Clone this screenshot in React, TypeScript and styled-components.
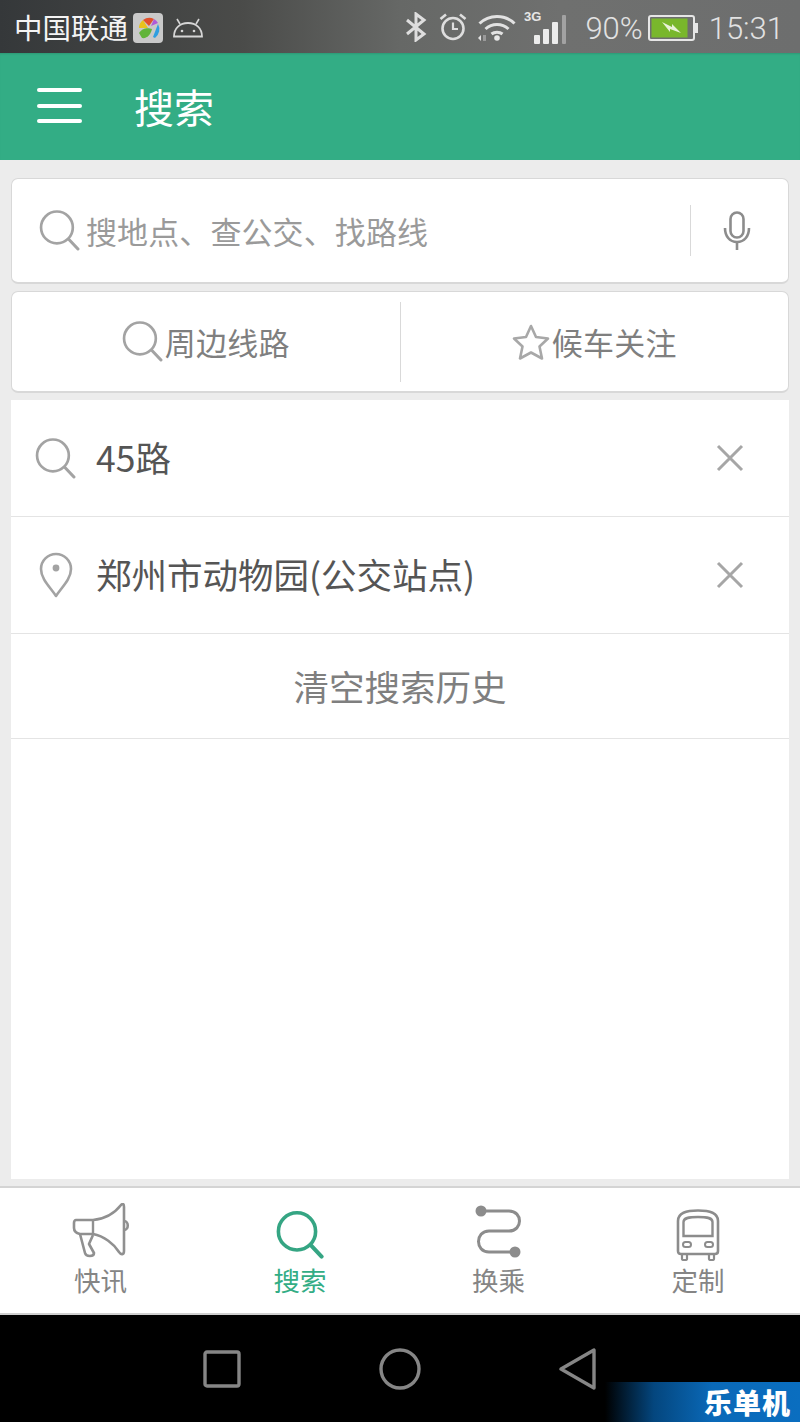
import React from "react";
import styled, { createGlobalStyle } from "styled-components";

const Global = createGlobalStyle`
  html, body { margin: 0; padding: 0; background: #000; }
  * { box-sizing: border-box; }
  body { font-family: "Noto Sans CJK SC", "Noto Sans", sans-serif; }
`;

const Page = styled.div`
  width: 800px;
  height: 1422px;
  display: flex;
  flex-direction: column;
  overflow: hidden;
  position: relative;
  background: #ececec;
`;

const StatusBar = styled.div`
  height: 53px;
  flex: none;
  display: flex;
  align-items: center;
  padding: 3px 16px 0 15px;
  background: linear-gradient(90deg, #35383a 0%, #4a4b49 30%, #666866 50%, #6f706f 70%, #6d6e6e 100%);
  color: #fff;
`;

const Carrier = styled.span`
  font-size: 28.5px;
  line-height: 1;
  color: #f4f4f4;
  letter-spacing: 0;
  margin-top: -1px;
  margin-left: -1px;
`;

const StatusLeft = styled.div`
  display: flex;
  align-items: center;
`;

const StatusRight = styled.div`
  margin-left: auto;
  display: flex;
  align-items: center;
  color: #dcdcdc;
`;

const StatusText = styled.span<{ $ml?: number }>`
  font-family: "Roboto", sans-serif;
  font-weight: 300;
  font-size: 31px;
  line-height: 1;
  color: #e2e2e2;
  margin-left: ${(p) => p.$ml ?? 0}px;
`;

const Header = styled.header`
  height: 107px;
  flex: none;
  display: flex;
  align-items: center;
  padding-left: 37px;
  background: #33ad85;
  box-shadow: inset 0 2px 2px -1px rgba(0, 0, 0, 0.12);
`;

const Burger = styled.div`
  width: 45px;
  height: 35px;
  display: flex;
  flex-direction: column;
  justify-content: space-between;
  margin-right: 52px;
  margin-top: -2px;
  & > i {
    display: block;
    height: 4px;
    border-radius: 2px;
    background: #fff;
  }
`;

const Title = styled.h1`
  margin: 0;
  font-size: 40px;
  line-height: 1;
  font-weight: 400;
  color: #fff;
  margin-top: -1px;
`;

const Content = styled.main`
  flex: 1;
  display: flex;
  flex-direction: column;
  padding: 18px 11px 7px;
  gap: 7px;
  min-height: 0;
`;

const Card = styled.div<{ $h: number }>`
  height: ${(p) => p.$h}px;
  flex: none;
  background: #fff;
  border: 1px solid #d8d8d8;
  border-bottom-width: 2px;
  border-radius: 7px;
  display: flex;
  align-items: center;
`;

const SearchField = styled.div`
  flex: 1;
  display: flex;
  align-items: center;
  padding-left: 27px;
  gap: 6px;
  height: 100%;
`;

const Placeholder = styled.span`
  font-size: 31px;
  color: #9a9a9a;
  line-height: 1;
  margin-top: -1px;
  letter-spacing: 0.1px;
`;

const VDivider = styled.div<{ $h: number }>`
  width: 1px;
  height: ${(p) => p.$h}px;
  background: #d9d9d9;
  flex: none;
`;

const MicBox = styled.div`
  width: 97px;
  display: flex;
  justify-content: center;
  align-items: center;
  padding: 0 6px 0 0;
`;

const HalfButton = styled.div`
  flex: 1;
  display: flex;
  justify-content: center;
  align-items: center;
  gap: 2px;
  height: 100%;
  font-size: 31px;
  letter-spacing: 0.2px;
  color: #7f7f7f;
  line-height: 1;
`;

const List = styled.div`
  flex: 1;
  background: #fff;
  display: flex;
  flex-direction: column;
`;

const Row = styled.div`
  height: 117px;
  flex: none;
  border-bottom: 1px solid #e4e4e4;
  display: flex;
  align-items: center;
  padding: 0 45px 0 24px;
`;

const IconSlot = styled.div`
  width: 61px;
  flex: none;
  display: flex;
  align-items: center;
  justify-content: flex-start;
`;

const RowText = styled.span`
  flex: 1;
  font-size: 35.5px;
  line-height: 1;
  color: #555;
  margin-top: -2px;
`;

const ClearRow = styled.div`
  height: 105px;
  flex: none;
  border-bottom: 1px solid #e4e4e4;
  display: flex;
  align-items: center;
  justify-content: center;
  font-size: 35.5px;
  color: #7f7f7f;
  line-height: 1;
`;

const TabBar = styled.nav`
  height: 129px;
  flex: none;
  background: #fff;
  border-top: 2px solid #d4d4d4;
  border-bottom: 2px solid #cfcfcf;
  display: grid;
  grid-template-columns: 201px 198px 199px 200px;
`;

const Tab = styled.div<{ $active?: boolean; $iconGap: number }>`
  display: flex;
  flex-direction: column;
  align-items: center;
  justify-content: flex-end;
  padding-bottom: 20px;
  font-size: 26.5px;
  line-height: 1;
  color: ${(p) => (p.$active ? "#33ad85" : "#858585")};
  & > svg {
    margin-bottom: ${(p) => p.$iconGap}px;
  }
`;

const NavBar = styled.div`
  flex: none;
  height: 107px;
  background: #000;
  display: flex;
  align-items: center;
  justify-content: center;
  position: relative;
`;

const NavSlot = styled.div`
  width: 178px;
  display: flex;
  justify-content: center;
`;

const Watermark = styled.div`
  position: absolute;
  right: 0;
  bottom: 0;
  width: 195px;
  height: 40px;
  display: flex;
  align-items: center;
  justify-content: flex-end;
  padding-right: 9px;
  background: linear-gradient(90deg, #000 0%, #04467e 25%, #0a69b8 55%, #0a6ec0 100%);
  color: #fff;
  font-size: 28px;
  font-weight: 900;
  letter-spacing: 1px;
  line-height: 1;
`;

const Lens = ({ size, color = "#a3a3a3", sw = 2.6 }: { size: number; color?: string; sw?: number }) => (
  <svg width={size} height={size} viewBox="0 0 40 40" fill="none">
    <circle cx="17.5" cy="17" r="15.5" stroke={color} strokeWidth={sw} />
    <path d="M29 28.5 L38 38" stroke={color} strokeWidth={sw + 0.4} strokeLinecap="round" />
  </svg>
);

const Cross = () => (
  <svg width="28" height="28" viewBox="0 0 28 28" fill="none">
    <path d="M2 2 L26 26 M26 2 L2 26" stroke="#a6a6a6" strokeWidth="3" />
  </svg>
);

const Launcher = () => (
  <svg width="30" height="30" viewBox="0 0 30 30" style={{ marginLeft: 5, marginTop: -1 }}>
    <rect width="30" height="30" rx="4" fill="#c9c9c9" />
    <path d="M6 15 A10 10 0 0 1 10 7 L15 15 Z" fill="#e8c21c" />
    <path d="M10 7 A11 11 0 0 1 21 6 L16 13 Z" fill="#e2502b" />
    <path d="M21 6 A10 10 0 0 1 25 10 L18 13 Z" fill="#b05bd8" />
    <path d="M25 11 A11 11 0 0 1 22 25 L20 24 Z" fill="#2f9fe0" />
    <path d="M6 20 C10 14 16 15 19 16 C18 21 14 26 9 25 Z" fill="#62b43a" />
  </svg>
);

const AndroidHead = () => (
  <svg width="32" height="20" viewBox="0 0 32 20" fill="none" style={{ marginLeft: 9 }}>
    <path d="M2 18.5 C2 10 8 5 16 5 C24 5 30 10 30 18.5 Z" stroke="#d6d6d6" strokeWidth="1.8" />
    <path d="M8 6 L5 1 M24 6 L27 1" stroke="#d6d6d6" strokeWidth="1.6" />
    <circle cx="10" cy="13" r="1.3" fill="#d6d6d6" />
    <circle cx="22" cy="13" r="1.3" fill="#d6d6d6" />
  </svg>
);

const Bluetooth = () => (
  <svg width="22" height="30" viewBox="0 0 22 30" fill="none" style={{ marginTop: -3 }}>
    <path d="M2 8 L19 22 L11 28 L11 2 L19 8 L2 22" stroke="#dedede" strokeWidth="3" />
  </svg>
);

const Alarm = () => (
  <svg width="28" height="28" viewBox="0 0 28 28" fill="none" style={{ marginLeft: 12, marginTop: -3 }}>
    <circle cx="14" cy="15.5" r="10.5" stroke="#dedede" strokeWidth="2.6" />
    <path d="M14 9.5 V16 H19" stroke="#dedede" strokeWidth="2.2" />
    <path d="M1.5 6 L7 1.5 M26.5 6 L21 1.5" stroke="#dedede" strokeWidth="2.6" />
  </svg>
);

const Wifi = () => (
  <svg width="38" height="28" viewBox="0 0 38 28" fill="none" style={{ marginLeft: 11, marginTop: -3 }}>
    <path d="M1.5 10.5 C11 1 27 1 36.5 10.5" stroke="#e2e2e2" strokeWidth="3" />
    <path d="M7.5 16 C14 10 24 10 30.5 16" stroke="#e2e2e2" strokeWidth="3" />
    <path d="M13.5 21 C16.5 18.5 21.5 18.5 24.5 21" stroke="#e2e2e2" strokeWidth="3" />
    <circle cx="19" cy="25" r="2.8" fill="#e8e8e8" />
    <path d="M0 25 L3 22 V28 Z" fill="#e2e2e2" />
    <rect x="5" y="22" width="3" height="6" fill="#9a9a9a" />
  </svg>
);

const Signal = () => (
  <svg width="43" height="34" viewBox="0 0 43 34" style={{ marginLeft: 8, marginTop: -3 }}>
    <text x="0" y="11" fontFamily="Liberation Sans, sans-serif" fontSize="13" fontWeight="700" fill="#e6e6e6">3G</text>
    <rect x="10" y="25" width="6" height="9" rx="1" fill="#ececec" />
    <rect x="19" y="19" width="6" height="15" rx="1" fill="#ececec" />
    <rect x="28" y="12" width="6" height="22" rx="1" fill="#ececec" />
    <rect x="38" y="5" width="4" height="29" rx="1" fill="#a2a2a2" />
  </svg>
);

const Battery = () => (
  <svg width="50" height="26" viewBox="0 0 50 26" style={{ marginLeft: 5 }}>
    <rect x="1" y="1" width="45" height="24" rx="2" fill="none" stroke="#e6e6e6" strokeWidth="2" />
    <rect x="47" y="8" width="3" height="10" fill="#e6e6e6" />
    <rect x="3.5" y="3.5" width="36" height="19" fill="#79b72c" />
    <path d="M14 7 L24 12 L24 9 L33 18 L22 14 L22 17 Z" fill="#e9f2d8" />
  </svg>
);

const Mic = () => (
  <svg width="28" height="40" viewBox="0 0 28 40" fill="none">
    <rect x="7.5" y="1.5" width="13" height="25" rx="6.5" stroke="#8c8c8c" strokeWidth="2.6" />
    <path d="M2 17 C2 25 6.5 31 14 31 C21.5 31 26 25 26 17" stroke="#8c8c8c" strokeWidth="2.6" />
    <path d="M14 31 V39" stroke="#8c8c8c" strokeWidth="2.6" />
  </svg>
);

const Star = () => (
  <svg width="38" height="38" viewBox="0 0 38 38" fill="none">
    <path d="M19 3 L24 14 L36 15.500 L27.500 23.500 L30 35.500 L19 29.500 L8 35.500 L10.500 23.500 L2 15.500 L14 14 Z" stroke="#a8a8a8" strokeWidth="2.6" strokeLinejoin="round" />
  </svg>
);

const Pin = () => (
  <svg width="34" height="46" viewBox="0 0 34 46" fill="none" style={{ marginLeft: 4 }}>
    <path d="M17 44 C11 35 2 27 2 17 A15 15 0 0 1 32 17 C32 27 23 35 17 44 Z" stroke="#a3a3a3" strokeWidth="2.6" strokeLinejoin="round" />
    <circle cx="17" cy="16" r="3.4" fill="#a3a3a3" />
  </svg>
);

const Horn = () => (
  <svg width="58" height="58" viewBox="0 0 58 58" fill="none">
    <path d="M4 17 H21 C32 16 42 11 49 2 C51 0 52 1 52 4 V48 C52 52 49 52 47 49 C42 41 32 33 21 31 H8 C4 30 2 28 2 25 V20 C2 18 3 17 4 17 Z" stroke="#909090" strokeWidth="2.6" strokeLinejoin="round" />
    <path d="M21 17 V31" stroke="#909090" strokeWidth="2.4" />
    <path d="M52 18 C57 18 57 27 52 27" stroke="#909090" strokeWidth="2.6" />
    <path d="M8 31 L13 50 C14 54 22 54 22 50 L17 41 L21 32" stroke="#909090" strokeWidth="2.6" strokeLinejoin="round" />
  </svg>
);

const Route = () => (
  <svg width="52" height="54" viewBox="0 0 52 54" fill="none">
    <circle cx="8" cy="6" r="5.500" fill="#8c8c8c" />
    <circle cx="42" cy="47" r="5.500" fill="#8c8c8c" />
    <path d="M8 6 H36 C50 6 50 26 36 26 H16 C2 26 2 47 16 47 H42" stroke="#8c8c8c" strokeWidth="3" />
  </svg>
);

const Bus = () => (
  <svg width="44" height="52" viewBox="0 0 44 52" fill="none">
    <path d="M2 12 C2 4 10 1.500 22 1.500 C34 1.500 42 4 42 12 V42 C42 44 41 45 39 45 H5 C3 45 2 44 2 42 Z" stroke="#8c8c8c" strokeWidth="2.6" />
    <path d="M7.500 13 C7.500 9 12 8 22 8 C32 8 36.500 9 36.500 13 V27 H7.500 Z" stroke="#8c8c8c" strokeWidth="2.4" />
    <rect x="7" y="33" width="8" height="5" rx="2.500" stroke="#8c8c8c" strokeWidth="2" />
    <rect x="29" y="33" width="8" height="5" rx="2.500" stroke="#8c8c8c" strokeWidth="2" />
    <path d="M6 45 V50 C6 51.500 11 51.500 11 50 V45 M33 45 V50 C33 51.500 38 51.500 38 50 V45" stroke="#8c8c8c" strokeWidth="2.200" />
  </svg>
);

const NavSquare = () => (
  <svg width="38" height="38" viewBox="0 0 38 38" fill="none">
    <rect x="2" y="2" width="34" height="34" rx="2" stroke="#868686" strokeWidth="3.4" />
  </svg>
);

const NavCircle = () => (
  <svg width="42" height="42" viewBox="0 0 42 42" fill="none">
    <circle cx="21" cy="21" r="19" stroke="#868686" strokeWidth="3.4" />
  </svg>
);

const NavBack = () => (
  <svg width="38" height="42" viewBox="0 0 38 42" fill="none">
    <path d="M35 2 V40 L2 21 Z" stroke="#868686" strokeWidth="3.4" strokeLinejoin="round" />
  </svg>
);

export default function App() {
  return (
    <Page>
      <Global />
      <StatusBar>
        <StatusLeft>
          <Carrier>中国联通</Carrier>
          <Launcher />
          <AndroidHead />
        </StatusLeft>
        <StatusRight>
          <Bluetooth />
          <Alarm />
          <Wifi />
          <Signal />
          <StatusText $ml={18}>90%</StatusText>
          <Battery />
          <StatusText $ml={11}>15:31</StatusText>
        </StatusRight>
      </StatusBar>
      <Header>
        <Burger>
          <i />
          <i />
          <i />
        </Burger>
        <Title>搜索</Title>
      </Header>
      <Content>
        <Card $h={106}>
          <SearchField>
            <Lens size={41} />
            <Placeholder>搜地点、查公交、找路线</Placeholder>
          </SearchField>
          <VDivider $h={51} />
          <MicBox>
            <Mic />
          </MicBox>
        </Card>
        <Card $h={102}>
          <HalfButton>
            <Lens size={41} />
            周边线路
          </HalfButton>
          <VDivider $h={80} />
          <HalfButton>
            <Star />
            候车关注
          </HalfButton>
        </Card>
        <List>
          <Row>
            <IconSlot>
              <Lens size={41} />
            </IconSlot>
            <RowText>45路</RowText>
            <Cross />
          </Row>
          <Row>
            <IconSlot>
              <Pin />
            </IconSlot>
            <RowText>郑州市动物园(公交站点)</RowText>
            <Cross />
          </Row>
          <ClearRow>清空搜索历史</ClearRow>
        </List>
      </Content>
      <TabBar>
        <Tab $iconGap={6}>
          <Horn />
          快讯
        </Tab>
        <Tab $active $iconGap={8}>
          <Lens size={48} color="#35a583" sw={3} />
          搜索
        </Tab>
        <Tab $iconGap={8}>
          <Route />
          换乘
        </Tab>
        <Tab $iconGap={6}>
          <Bus />
          定制
        </Tab>
      </TabBar>
      <NavBar>
        <NavSlot>
          <NavSquare />
        </NavSlot>
        <NavSlot>
          <NavCircle />
        </NavSlot>
        <NavSlot>
          <NavBack />
        </NavSlot>
        <Watermark>乐单机</Watermark>
      </NavBar>
    </Page>
  );
}
